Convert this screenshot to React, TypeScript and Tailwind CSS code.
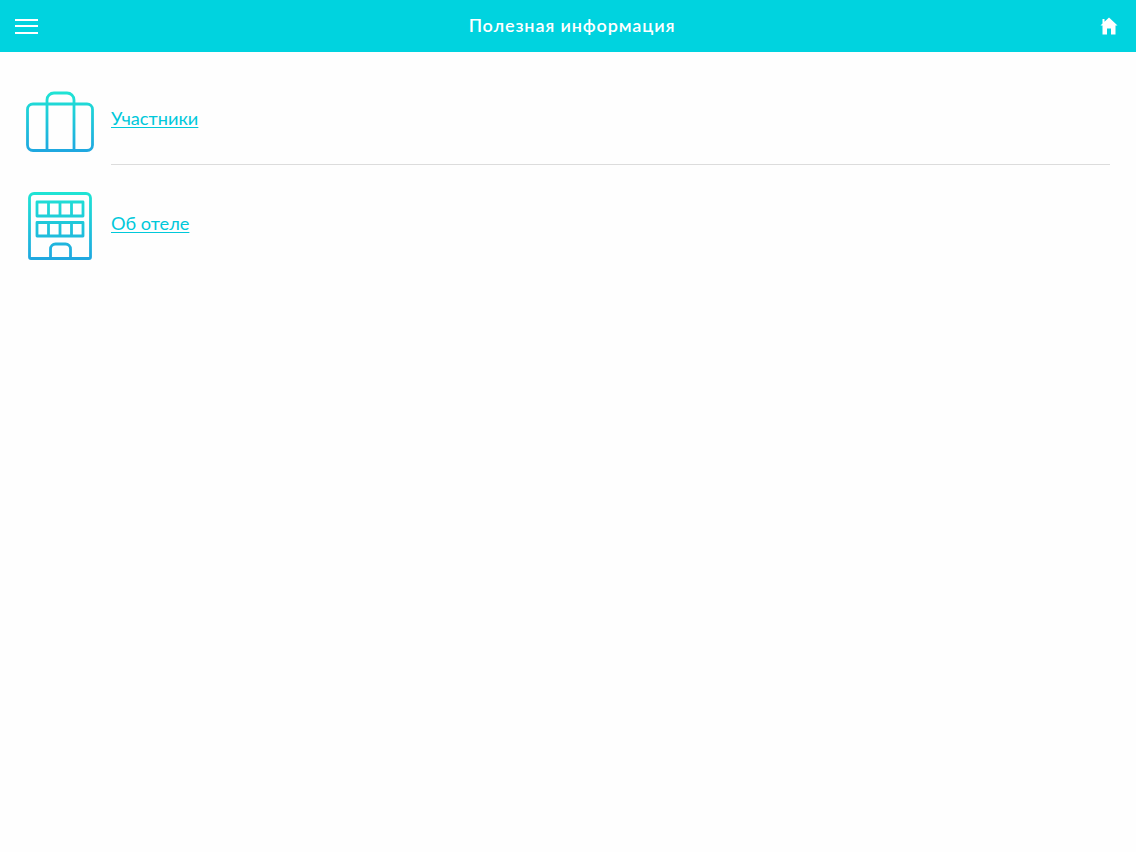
const BriefcaseIcon = () => (
  <svg width="68" height="62" viewBox="0 0 68 62" fill="none">
    <defs>
      <linearGradient id="briefcaseGrad" x1="0" y1="0" x2="0" y2="1">
        <stop offset="0%" stopColor="#1fe3d4" />
        <stop offset="100%" stopColor="#1fa8e0" />
      </linearGradient>
    </defs>
    <path
      d="M7 13H61a5.500 5.500 0 0 1 5.500 5.500V54a5.500 5.500 0 0 1-5.500 5.500H7A5.500 5.500 0 0 1 1.500 54V18.500A5.500 5.500 0 0 1 7 13ZM21 59.500V9a7 7 0 0 1 7-7H41a7 7 0 0 1 7 7V59.500"
      stroke="url(#briefcaseGrad)"
      strokeWidth="2.800"
      strokeLinejoin="round"
    />
  </svg>
);

const HotelIcon = () => (
  <svg width="64" height="68" viewBox="0 0 64 68" fill="none">
    <defs>
      <linearGradient id="hotelGrad" x1="0" y1="0" x2="0" y2="1">
        <stop offset="0%" stopColor="#1fe3d4" />
        <stop offset="100%" stopColor="#1fa8e0" />
      </linearGradient>
    </defs>
    <path
      d="M3 66.500A1.500 1.500 0 0 1 1.500 65V6a4.500 4.500 0 0 1 4.500-4.500H58a4.500 4.500 0 0 1 4.500 4.500V65a1.500 1.500 0 0 1-1.500 1.500ZM9 10H55V24H9ZM20.500 10V24M32 10V24M43.500 10V24M9 30.500H55V44H9ZM20.500 30.500V44M32 30.500V44M43.500 30.500V44M22.500 66.500V57a5 5 0 0 1 5-5H37.500a5 5 0 0 1 5 5V66.500"
      stroke="url(#hotelGrad)"
      strokeWidth="2.800"
      strokeLinejoin="round"
    />
  </svg>
);

const HomeIcon = () => (
  <svg width="18" height="18" viewBox="0 0 18 18" fill="white">
    <path d="M9 0.500 L17.500 8.500 L15.500 8.500 V17.500 H11 V11.500 H7 V17.500 H2.500 V8.500 H0.500 L2.500 6.600 V2 H4.500 V4.700 Z" />
  </svg>
);

const App = () => {
  return (
    <div className="min-h-screen bg-[#fefefe] font-['Lato','Open_Sans',sans-serif]">
      <header className="flex h-[52px] items-center justify-between bg-[#00d3df] pl-[15px] pr-[18px]">
        <button type="button" className="flex w-[23px] flex-col gap-[4.500px]">
          <span className="h-[2px] bg-white" />
          <span className="h-[2px] bg-white" />
          <span className="h-[2px] bg-white" />
        </button>
        <h1 className="ml-[6px] pb-[2px] text-[18px] font-semibold tracking-[0.850px] text-white">
          Полезная информация
        </h1>
        <HomeIcon />
      </header>

      <main className="pt-[20px] pr-[26px]">
        <div className="flex h-[93px] items-center">
          <div className="ml-[26px] mt-[6px] flex w-[68px] justify-center">
            <BriefcaseIcon />
          </div>
          <div className="ml-[17px] flex h-full flex-1 items-center border-b border-[#dcdcdc]">
            <a href="#" className="pt-[2px] text-[18.200px] text-[#00c8da] underline underline-offset-2">
              Участники
            </a>
          </div>
        </div>
        <div className="flex h-[116px] items-center">
          <div className="ml-[26px] mt-[6px] flex w-[68px] justify-center">
            <HotelIcon />
          </div>
          <div className="ml-[17px] flex h-full flex-1 items-center">
            <a href="#" className="pt-[2px] text-[18.200px] text-[#00c8da] underline underline-offset-2">
              Об отеле
            </a>
          </div>
        </div>
      </main>
    </div>
  );
};

export default App;
